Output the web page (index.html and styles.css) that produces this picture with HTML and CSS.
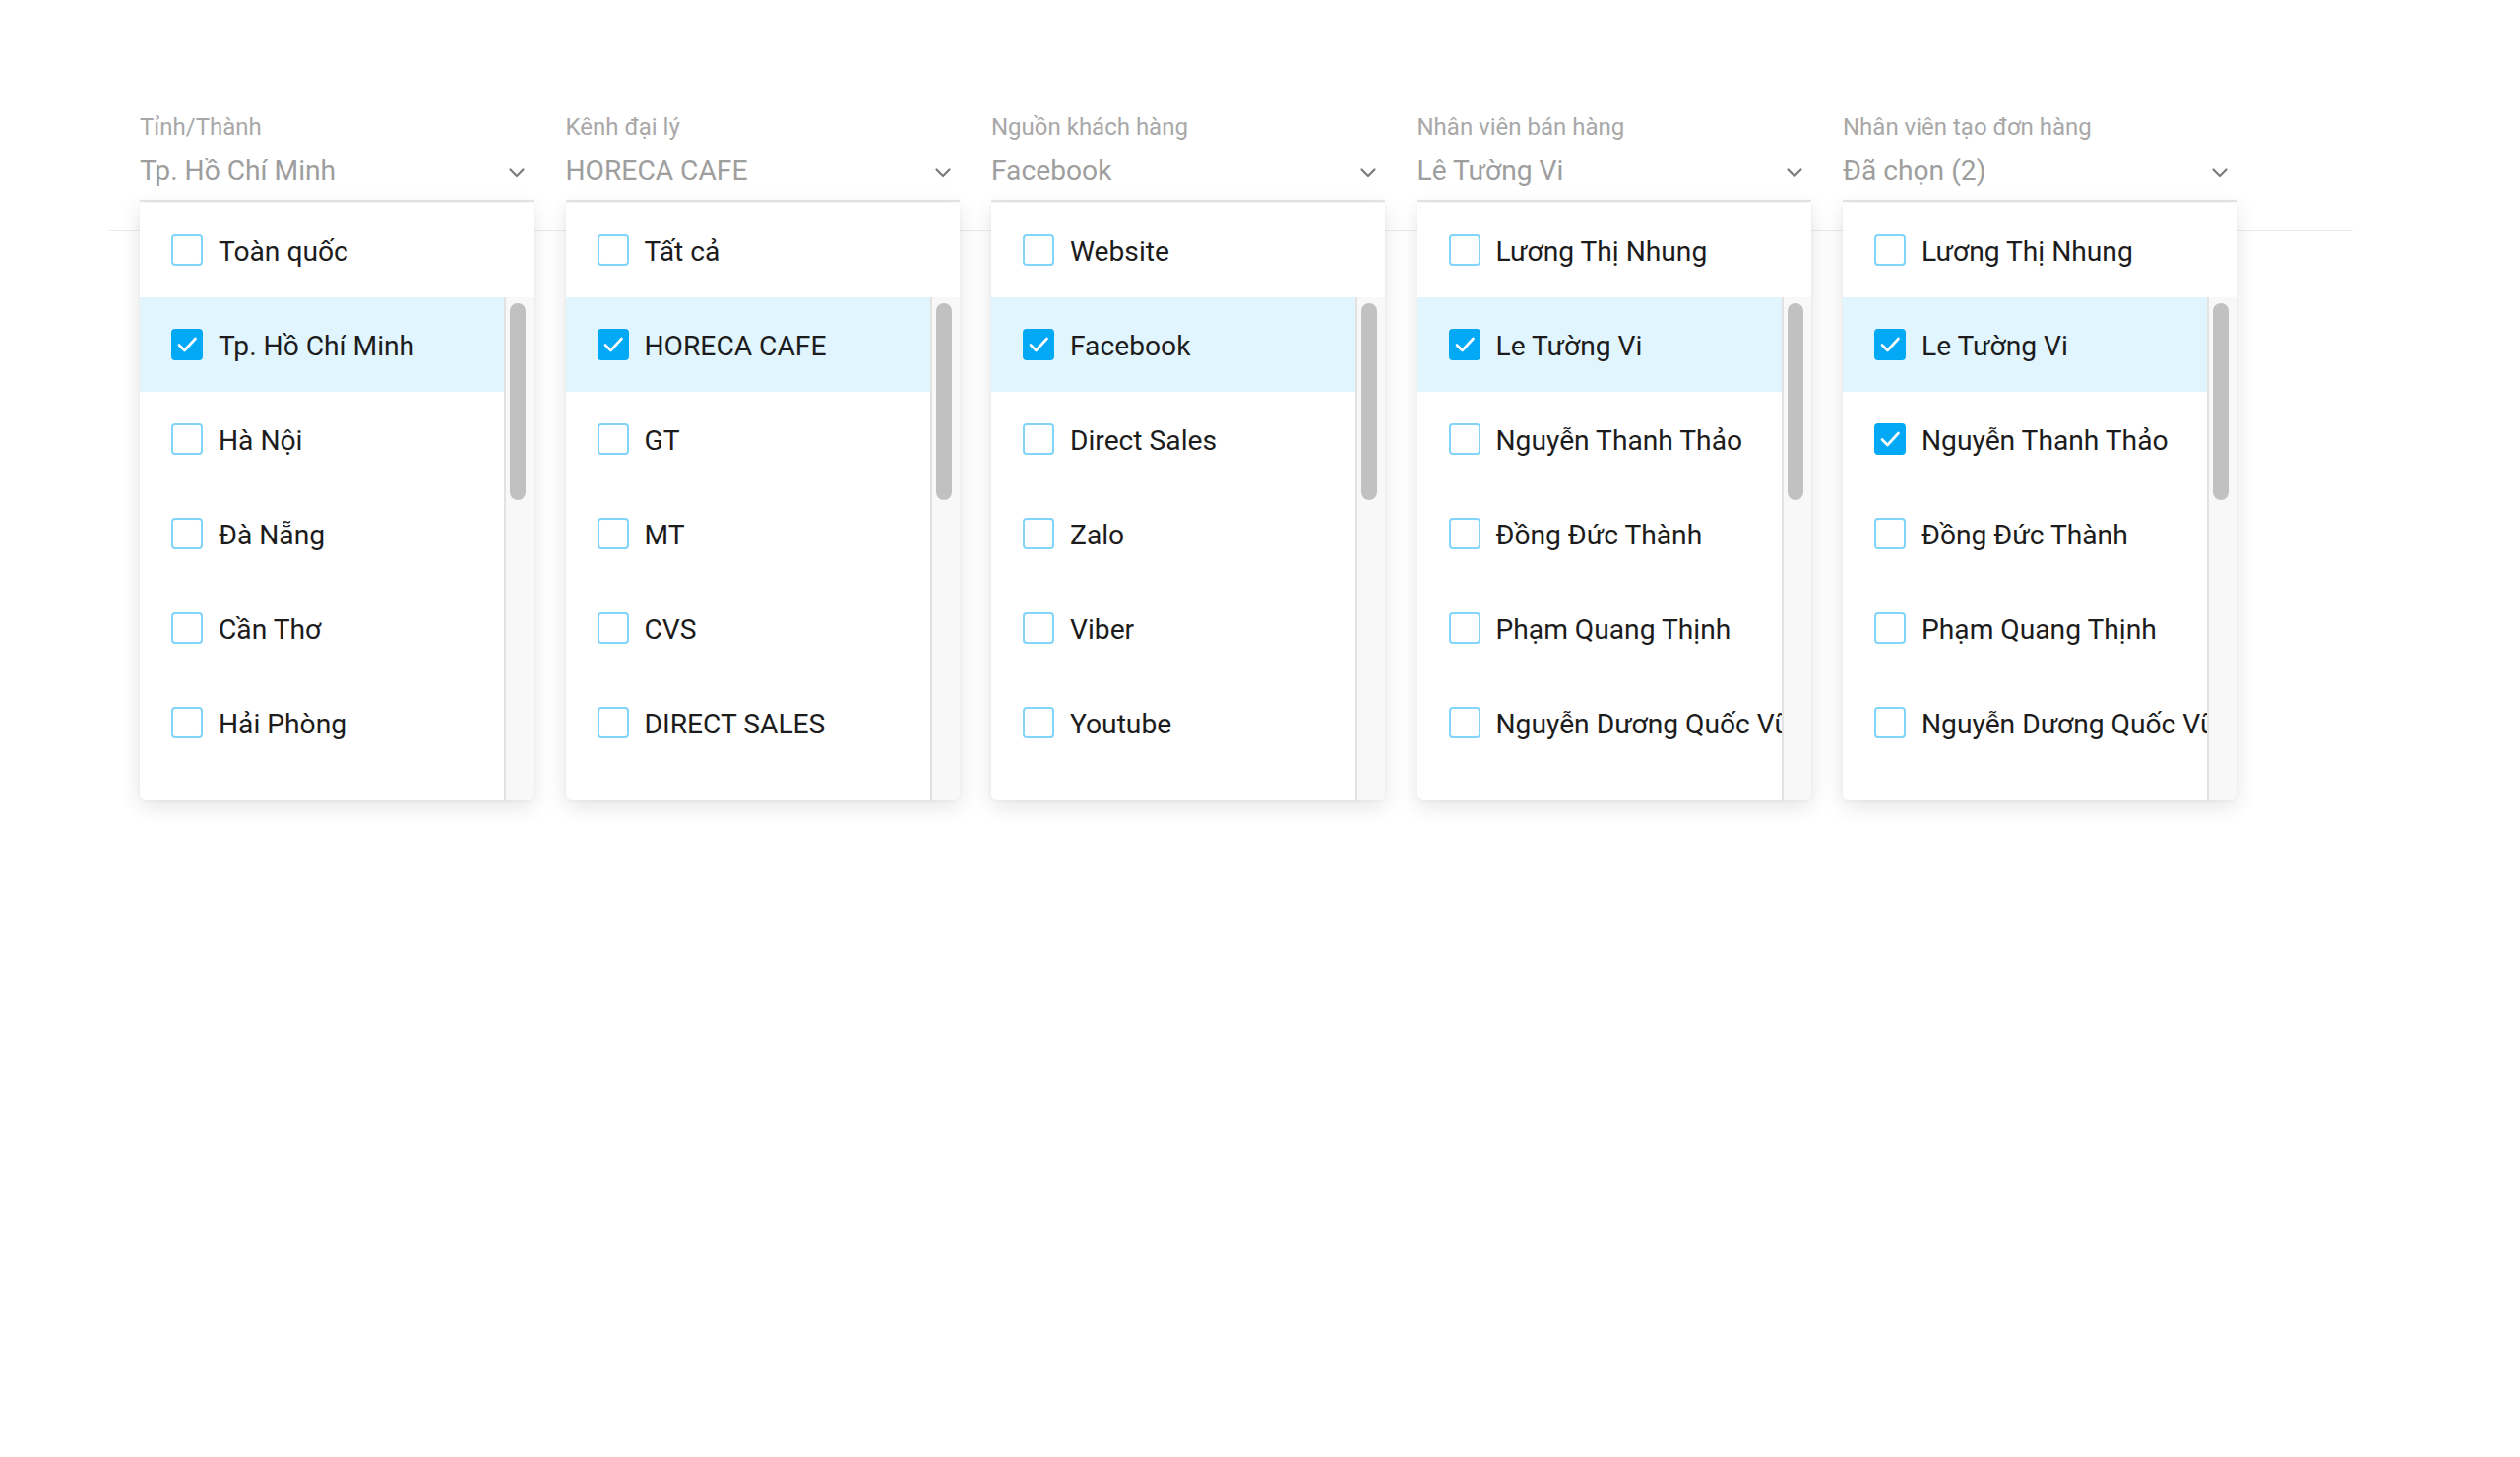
FILE: index.html
```html
<!DOCTYPE html>
<html lang="vi">
<head>
<meta charset="utf-8">
<title>Bộ lọc</title>
<link rel="stylesheet" href="styles.css">
</head>
<body>
<div class="page">
  <div class="filter-bar">
    <div class="field">
      <div class="label">Tỉnh/Thành</div>
      <div class="value"><span>Tp. Hồ Chí Minh</span><svg class="chev" viewBox="0 0 16 10"><path d="M1.5 1.5 L8 8 L14.5 1.5"/></svg></div>
      <div class="panel">
        <div class="opt"><span class="cb"></span><span class="txt">Toàn quốc</span></div>
        <div class="scroll">
          <div class="list">
            <div class="opt sel"><span class="cb on"><svg viewBox="0 0 32 32"><path d="M8 16.5 L13.5 22 L24.5 10"/></svg></span><span class="txt">Tp. Hồ Chí Minh</span></div>
            <div class="opt"><span class="cb"></span><span class="txt">Hà Nội</span></div>
            <div class="opt"><span class="cb"></span><span class="txt">Đà Nẵng</span></div>
            <div class="opt"><span class="cb"></span><span class="txt">Cần Thơ</span></div>
            <div class="opt"><span class="cb"></span><span class="txt">Hải Phòng</span></div>
          </div>
          <div class="track"><div class="thumb"></div></div>
        </div>
      </div>
    </div>
    <div class="field">
      <div class="label">Kênh đại lý</div>
      <div class="value"><span>HORECA CAFE</span><svg class="chev" viewBox="0 0 16 10"><path d="M1.5 1.5 L8 8 L14.5 1.5"/></svg></div>
      <div class="panel">
        <div class="opt"><span class="cb"></span><span class="txt">Tất cả</span></div>
        <div class="scroll">
          <div class="list">
            <div class="opt sel"><span class="cb on"><svg viewBox="0 0 32 32"><path d="M8 16.5 L13.5 22 L24.5 10"/></svg></span><span class="txt">HORECA CAFE</span></div>
            <div class="opt"><span class="cb"></span><span class="txt">GT</span></div>
            <div class="opt"><span class="cb"></span><span class="txt">MT</span></div>
            <div class="opt"><span class="cb"></span><span class="txt">CVS</span></div>
            <div class="opt"><span class="cb"></span><span class="txt">DIRECT SALES</span></div>
          </div>
          <div class="track"><div class="thumb"></div></div>
        </div>
      </div>
    </div>
    <div class="field">
      <div class="label">Nguồn khách hàng</div>
      <div class="value"><span>Facebook</span><svg class="chev" viewBox="0 0 16 10"><path d="M1.5 1.5 L8 8 L14.5 1.5"/></svg></div>
      <div class="panel">
        <div class="opt"><span class="cb"></span><span class="txt">Website</span></div>
        <div class="scroll">
          <div class="list">
            <div class="opt sel"><span class="cb on"><svg viewBox="0 0 32 32"><path d="M8 16.5 L13.5 22 L24.5 10"/></svg></span><span class="txt">Facebook</span></div>
            <div class="opt"><span class="cb"></span><span class="txt">Direct Sales</span></div>
            <div class="opt"><span class="cb"></span><span class="txt">Zalo</span></div>
            <div class="opt"><span class="cb"></span><span class="txt">Viber</span></div>
            <div class="opt"><span class="cb"></span><span class="txt">Youtube</span></div>
          </div>
          <div class="track"><div class="thumb"></div></div>
        </div>
      </div>
    </div>
    <div class="field">
      <div class="label">Nhân viên bán hàng</div>
      <div class="value"><span>Lê Tường Vi</span><svg class="chev" viewBox="0 0 16 10"><path d="M1.5 1.5 L8 8 L14.5 1.5"/></svg></div>
      <div class="panel">
        <div class="opt"><span class="cb"></span><span class="txt">Lương Thị Nhung</span></div>
        <div class="scroll">
          <div class="list">
            <div class="opt sel"><span class="cb on"><svg viewBox="0 0 32 32"><path d="M8 16.5 L13.5 22 L24.5 10"/></svg></span><span class="txt">Le Tường Vi</span></div>
            <div class="opt"><span class="cb"></span><span class="txt">Nguyễn Thanh Thảo</span></div>
            <div class="opt"><span class="cb"></span><span class="txt">Đồng Đức Thành</span></div>
            <div class="opt"><span class="cb"></span><span class="txt">Phạm Quang Thịnh</span></div>
            <div class="opt"><span class="cb"></span><span class="txt">Nguyễn Dương Quốc Vũ</span></div>
          </div>
          <div class="track"><div class="thumb"></div></div>
        </div>
      </div>
    </div>
    <div class="field">
      <div class="label">Nhân viên tạo đơn hàng</div>
      <div class="value"><span>Đã chọn (2)</span><svg class="chev" viewBox="0 0 16 10"><path d="M1.5 1.5 L8 8 L14.5 1.5"/></svg></div>
      <div class="panel">
        <div class="opt"><span class="cb"></span><span class="txt">Lương Thị Nhung</span></div>
        <div class="scroll">
          <div class="list">
            <div class="opt sel"><span class="cb on"><svg viewBox="0 0 32 32"><path d="M8 16.5 L13.5 22 L24.5 10"/></svg></span><span class="txt">Le Tường Vi</span></div>
            <div class="opt"><span class="cb on"><svg viewBox="0 0 32 32"><path d="M8 16.5 L13.5 22 L24.5 10"/></svg></span><span class="txt">Nguyễn Thanh Thảo</span></div>
            <div class="opt"><span class="cb"></span><span class="txt">Đồng Đức Thành</span></div>
            <div class="opt"><span class="cb"></span><span class="txt">Phạm Quang Thịnh</span></div>
            <div class="opt"><span class="cb"></span><span class="txt">Nguyễn Dương Quốc Vũ</span></div>
          </div>
          <div class="track"><div class="thumb"></div></div>
        </div>
      </div>
    </div>
  </div>
</div>
</body>
</html>
```

FILE: styles.css
```css
* { box-sizing: border-box; }
html, body { margin: 0; padding: 0; background: #fff; }
body { font-family: Roboto, "Noto Sans", "Liberation Sans", sans-serif; width: 2560px; height: 1480px; overflow: hidden; }

.page { padding-left: 110px; width: 2390px; }

.filter-bar {
  display: flex;
  gap: 32.5px;
  padding: 113px 0 29px 32px;
  border-bottom: 1px solid #ebebeb;
}

.field { position: relative; width: 400px; flex: none; }

.label {
  font-size: 24px;
  line-height: 32px;
  color: #a8a8a8;
  white-space: nowrap;
}

.value {
  margin-top: 9px;
  height: 51px;
  padding-bottom: 9px;
  border-bottom: 2px solid #e6e6e6;
  display: flex;
  align-items: flex-start;
  justify-content: space-between;
  font-size: 28.2px;
  line-height: 40px;
  color: #9e9e9e;
}

.chev { width: 16px; height: 10px; margin-right: 9px; margin-top: 17px; flex: none; }
.chev path { fill: none; stroke: #7a7a7a; stroke-width: 2.2; stroke-linecap: round; stroke-linejoin: round; }

.panel {
  position: absolute;
  left: 0;
  top: calc(100% + 1px);
  width: 400px;
  background: #fff;
  border-radius: 4px 4px 6px 6px;
  box-shadow: 0 6px 22px rgba(0, 0, 0, 0.11), 0 1px 4px rgba(0, 0, 0, 0.04);
  overflow: hidden;
  z-index: 2;
}

.opt {
  height: 96px;
  display: flex;
  align-items: center;
  padding-left: 32px;
  white-space: nowrap;
  overflow: hidden;
}
.opt.sel { background: #e1f5fe; }

.cb {
  flex: none;
  width: 32px;
  height: 32px;
  border: 2px solid #81d4fa;
  border-radius: 4px;
  background: #fff;
  display: flex;
  align-items: center;
  justify-content: center;
}
.cb.on { background: #03a9f4; border-color: #03a9f4; }
.cb svg { width: 32px; height: 32px; flex: none; }
.cb svg path { fill: none; stroke: #fff; stroke-width: 2.6; stroke-linecap: round; stroke-linejoin: round; }

.txt {
  margin-left: 16px;
  font-size: 28.2px;
  line-height: 40px;
  color: #1c1c1c;
  padding-top: 3px;
}

.scroll { display: flex; height: 511px; }
.list { flex: 1; min-width: 0; overflow: hidden; }

.track {
  flex: none;
  width: 30px;
  background: #f8f8f8;
  border-left: 2px solid #e2e2e2;
  padding: 6px 8px 0 4px;
}
.thumb {
  width: 16px;
  height: 200px;
  border-radius: 8px;
  background: #c1c1c1;
}
```
